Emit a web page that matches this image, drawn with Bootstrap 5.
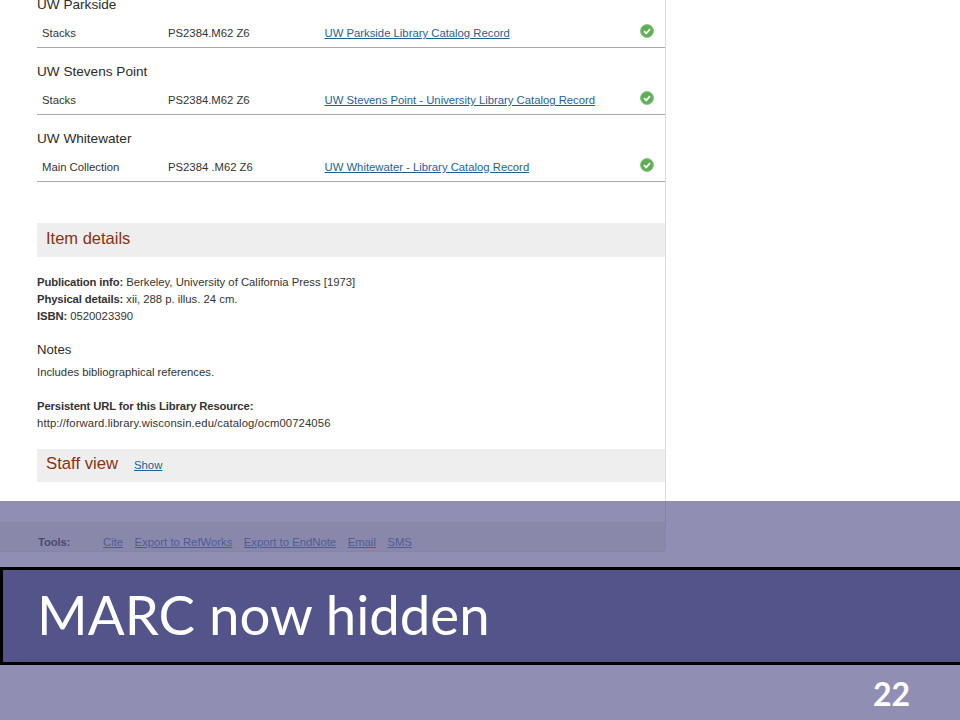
<!DOCTYPE html>
<html lang="en">
<head>
<meta charset="utf-8">
<title>MARC now hidden</title>
<link href="https://cdn.jsdelivr.net/npm/bootstrap@5.3.0/dist/css/bootstrap.min.css" rel="stylesheet">
<style>
html,body{margin:0;height:720px;overflow:hidden;background:#fff}
body{font-family:"Liberation Sans",Arial,sans-serif;font-size:11.3px;line-height:16.8px;color:#333}
b{letter-spacing:-.14px}
.slide-top{height:501px;overflow:hidden}
.record{display:flow-root;width:666px;height:501px;padding-left:37px;border-right:1px solid #dcdcdc}
.lib-name{font-size:13.6px;font-weight:400;color:#2b2b2b;line-height:20px;margin:0}
.lib-group{margin-bottom:14px}
.lib-group:first-child{margin-top:-5px}
.lib-row{height:33px;border-bottom:1px solid #a9a9a9;padding-left:5px;padding-top:10px}
.c-loc{width:126px}
.c-call{width:156.5px}
.c-link{width:315.5px}
.record a{color:#1e6295;text-decoration:underline}
.tick{display:block;width:14px;height:14px;margin-top:-1px}
.sec-bar{background:#eee;padding-left:9px;color:#853412;font-size:16.5px;line-height:30px;height:34px}
.bar-item{margin-top:41px}
.info{margin-top:17px}
.notes-h{font-size:13.2px;color:#2b2b2b;font-weight:400;line-height:18px;margin:17px 0 5px}
.perm{margin-top:17px}
.url-line{letter-spacing:.11px}
.bar-staff{margin-top:17px;height:33px;display:flex;align-items:center;gap:16px}
.bar-staff .ttl{font-size:16.7px;margin-top:-2px}
.bar-staff a{font-size:11.3px;margin-top:-1px}
.band{background:#908fb3;height:219px}
.shade{width:666px;height:51px;padding-top:21px;border-right:1px solid #8583a6;border-bottom:1px solid #8583a6;border-bottom-right-radius:4px}
.tool-strip{height:29px;background:#8988ab;border-top:1px solid #8684a8;border-bottom-right-radius:4px;padding-left:38px;padding-top:11px;font-size:11.3px;line-height:16px;color:#4a4a6e}
.tool-strip b{width:65px}
.tool-strip a{color:#4e5c98;text-decoration:underline;margin-right:11.5px}
.headline{margin-top:15px;height:98px;background:#53548a;border:3px solid #000;border-right:0;padding-left:34px;color:#fff;font-family:Lato,"Open Sans",sans-serif;font-size:54.6px;line-height:88px}
.pageno{color:#fff;font-family:Lato,"Open Sans",sans-serif;font-weight:700;font-size:32px;line-height:36px;padding-right:50px;margin-top:11px}
</style>
</head>
<body>
<div class="slide-top">
  <div class="record">
    <div class="lib-group">
      <h3 class="lib-name">UW Parkside</h3>
      <div class="lib-row d-flex"><span class="c-loc">Stacks</span><span class="c-call">PS2384.M62 Z6</span><span class="c-link"><a href="#">UW Parkside Library Catalog Record</a></span>
        <svg class="tick" viewBox="0 0 14 14"><circle cx="7" cy="7" r="6.5" fill="#5fae55" stroke="#8cc985"/><path d="M4 7.2l2.2 2.2L10 5.2" fill="none" stroke="#fff" stroke-width="1.8"/></svg></div>
    </div>
    <div class="lib-group">
      <h3 class="lib-name">UW Stevens Point</h3>
      <div class="lib-row d-flex"><span class="c-loc">Stacks</span><span class="c-call">PS2384.M62 Z6</span><span class="c-link"><a href="#">UW Stevens Point - University Library Catalog Record</a></span>
        <svg class="tick" viewBox="0 0 14 14"><circle cx="7" cy="7" r="6.5" fill="#5fae55" stroke="#8cc985"/><path d="M4 7.2l2.2 2.2L10 5.2" fill="none" stroke="#fff" stroke-width="1.8"/></svg></div>
    </div>
    <div class="lib-group">
      <h3 class="lib-name">UW Whitewater</h3>
      <div class="lib-row d-flex"><span class="c-loc">Main Collection</span><span class="c-call">PS2384 .M62 Z6</span><span class="c-link"><a href="#">UW Whitewater - Library Catalog Record</a></span>
        <svg class="tick" viewBox="0 0 14 14"><circle cx="7" cy="7" r="6.5" fill="#5fae55" stroke="#8cc985"/><path d="M4 7.2l2.2 2.2L10 5.2" fill="none" stroke="#fff" stroke-width="1.8"/></svg></div>
    </div>
    <div class="sec-bar bar-item">Item details</div>
    <div class="info"><b>Publication info:</b> Berkeley, University of California Press [1973]<br><b>Physical details:</b> xii, 288 p. illus. 24 cm.<br><b>ISBN:</b> 0520023390</div>
    <h4 class="notes-h">Notes</h4>
    <div>Includes bibliographical references.</div>
    <div class="perm"><b>Persistent URL for this Library Resource:</b><br><span class="url-line">http://forward.library.wisconsin.edu/catalog/ocm00724056</span></div>
    <div class="sec-bar bar-staff"><span class="ttl">Staff view</span><a href="#">Show</a></div>
  </div>
</div>
<div class="band">
  <div class="shade">
    <div class="tool-strip d-flex"><b>Tools:</b><a href="#">Cite</a><a href="#">Export to RefWorks</a><a href="#">Export to EndNote</a><a href="#">Email</a><a href="#">SMS</a></div>
  </div>
  <div class="headline">MARC now hidden</div>
  <div class="pageno text-end">22</div>
</div>
</body>
</html>
